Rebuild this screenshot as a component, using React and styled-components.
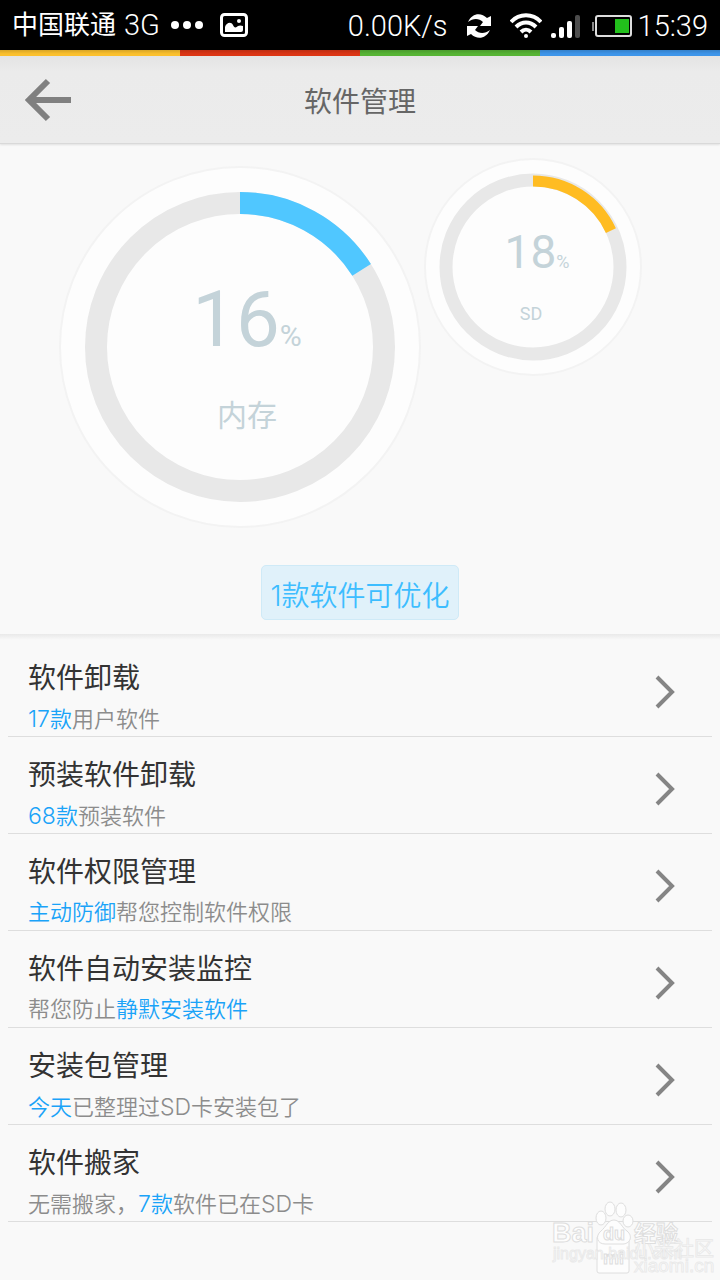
import React from "react";
import styled, { createGlobalStyle } from "styled-components";

const GlobalStyle = createGlobalStyle`
  * {
    box-sizing: border-box;
  }
  body {
    margin: 0;
    background: #f9f9f9;
    font-family: "Liberation Sans", "Noto Sans CJK SC", sans-serif;
  }
`;

const Page = styled.div`
  position: relative;
  width: 100%;
  min-height: 100vh;
  overflow: hidden;
`;

const StatusBar = styled.div`
  display: flex;
  align-items: center;
  justify-content: space-between;
  height: 50px;
  padding: 0 12px;
  background: #000;
  color: #fff;
  font-family: Roboto, "Noto Sans CJK SC", sans-serif;
  font-size: 26px;
  line-height: 48px;
`;

const StatusGroup = styled.div`
  display: flex;
  align-items: center;
  padding-top: ${(props) => props.$top || 0}px;
`;

const Carrier = styled.span`
  margin-right: 8px;
`;

const StatusText = styled.span`
  margin-left: ${(props) => props.$gap || 0}px;
  font-size: 29px;
  font-weight: 300;
`;

const StatusIcon = styled.svg`
  display: block;
  margin-left: ${(props) => props.$gap || 0}px;
`;

const Stripes = styled.div`
  display: grid;
  grid-template-columns: repeat(4, 1fr);
  height: 6px;
`;

const Stripe = styled.div`
  background: linear-gradient(rgba(0, 0, 0, 0.14), rgba(0, 0, 0, 0) 4px), ${(props) => props.$color};
`;

const Header = styled.header`
  display: grid;
  grid-template-columns: 96px 1fr 96px;
  align-items: center;
  height: 88px;
  background: linear-gradient(#e4e4e4, #ebebeb 16px, #ececec);
  border-bottom: 1px solid #d9d9d9;
  box-shadow: 0 1px 2px rgba(0, 0, 0, 0.1);
`;

const BackButton = styled.button`
  display: flex;
  align-items: center;
  height: 100%;
  padding: 0 0 0 24px;
  border: 0;
  background: none;
`;

const Title = styled.h1`
  margin: 0;
  padding-top: 6px;
  color: #666;
  font-size: 28px;
  font-weight: 400;
  line-height: 40px;
  text-align: center;
`;

const Summary = styled.section`
  height: 490px;
  display: flex;
  flex-direction: column;
  justify-content: space-between;
  align-items: center;
  padding: 14px 0;
`;

const Gauges = styled.div`
  display: flex;
  justify-content: center;
  align-items: flex-start;
  gap: 3px;
  width: 100%;
  padding-right: 19px;
`;

const GaugeBox = styled.div`
  display: grid;
  margin-top: ${(props) => props.$top}px;
`;

const Dial = styled.svg`
  grid-area: 1 / 1;
  display: block;
`;

const GaugeText = styled.div`
  grid-area: 1 / 1;
  display: flex;
  flex-direction: column;
  align-items: center;
  padding-top: ${(props) => (props.$large ? 108 : 66)}px;
  padding-left: ${(props) => (props.$large ? 14 : 8)}px;
  color: #c4d3d9;
  font-family: Roboto, "Noto Sans CJK SC", sans-serif;
`;

const Value = styled.div`
  font-size: ${(props) => (props.$large ? 78 : 46)}px;
  line-height: ${(props) => (props.$large ? 92 : 56)}px;
`;

const Percent = styled.span`
  font-size: ${(props) => (props.$large ? 30 : 18)}px;
`;

const GaugeLabel = styled.div`
  margin-top: 12px;
  padding-right: ${(props) => (props.$large ? 0 : 12)}px;
  font-size: ${(props) => (props.$large ? 30 : 18)}px;
  line-height: ${(props) => (props.$large ? 44 : 24)}px;
`;

const OptimizeButton = styled.button`
  height: 55px;
  padding: 6px 8px 0;
  border: 1px solid #cfeaf7;
  border-radius: 5px;
  background: #e0f1fa;
  color: #3dbdff;
  font-family: Inter, "Noto Sans CJK SC", sans-serif;
  font-size: 28px;
  font-weight: 350;
  line-height: 40px;
`;

const List = styled.ul`
  margin: 0;
  padding: 6px 8px 0;
  list-style: none;
  background: linear-gradient(#e9e9e9, #f9f9f9 6px);
`;

const Row = styled.li`
  border-bottom: 1px solid #dedede;
`;

const RowLink = styled.a`
  display: flex;
  align-items: center;
  justify-content: space-between;
  height: 96px;
  padding: 8px 36px 0 20px;
  color: inherit;
  text-decoration: none;
`;

const RowText = styled.div`
  padding-top: 8px;
`;

const RowTitle = styled.div`
  color: #333;
  font-size: 28px;
  line-height: 46px;
`;

const RowNote = styled.div`
  color: #8c8c8c;
  font-size: 22px;
  font-weight: 350;
  line-height: 34px;
`;

const Mark = styled.span`
  color: #1aa3f8;
`;

const Latin = styled.span`
  font-family: Inter, sans-serif;
  font-size: 23px;
  font-weight: 300;
`;

const Watermark = styled.svg`
  position: absolute;
  right: 0;
  bottom: 0;
  pointer-events: none;
`;

const stripes = ["#fbc02d", "#dc3514", "#56b434", "#3d95ea"];

const items = [
  { title: "软件卸载", note: <><Mark><Latin>17</Latin>款</Mark>用户软件</> },
  { title: "预装软件卸载", note: <><Mark><Latin>68</Latin>款</Mark>预装软件</> },
  { title: "软件权限管理", note: <><Mark>主动防御</Mark>帮您控制软件权限</> },
  { title: "软件自动安装监控", note: <>帮您防止<Mark>静默安装软件</Mark></> },
  { title: "安装包管理", note: <><Mark>今天</Mark>已整理过<Latin>SD</Latin>卡安装包了</> },
  { title: "软件搬家", note: <>无需搬家，<Mark><Latin>7</Latin>款</Mark>软件已在<Latin>SD</Latin>卡</> },
];

function Gauge({ size, ring, ringWidth, arc, arcWidth, percent, color, label, large, top }) {
  const c = size / 2;
  const length = 2 * Math.PI * arc;
  return (
    <GaugeBox $top={top}>
      <Dial width={size} height={size}>
        <circle cx={c} cy={c} r={c - 1} fill="#fdfdfd" stroke="#f3f3f3" strokeWidth="2" />
        <circle cx={c} cy={c} r={ring} fill="none" stroke="#e8e8e8" strokeWidth={ringWidth} />
        <circle
          cx={c}
          cy={c}
          r={arc}
          fill="none"
          stroke={color}
          strokeWidth={arcWidth}
          strokeDasharray={`${(length * percent) / 100} ${length}`}
          transform={`rotate(-90 ${c} ${c})`}
        />
      </Dial>
      <GaugeText $large={large}>
        <Value $large={large}>
          {percent}
          <Percent $large={large}>%</Percent>
        </Value>
        <GaugeLabel $large={large}>{label}</GaugeLabel>
      </GaugeText>
    </GaugeBox>
  );
}

function PhoneStatus() {
  return (
    <StatusBar>
      <StatusGroup>
        <Carrier>中国联通</Carrier>
        <StatusText>3G</StatusText>
        <StatusIcon $gap={11} width="32" height="8" fill="#fff">
          <circle cx="4" cy="4" r="4" />
          <circle cx="16" cy="4" r="4" />
          <circle cx="28" cy="4" r="4" />
        </StatusIcon>
        <StatusIcon $gap={17} width="28" height="24" fill="none">
          <rect x="1.5" y="1.5" width="25" height="21" rx="3" stroke="#fff" strokeWidth="3" />
          <path d="M5 19V14C6 10 11 8 13 12C14 15 16 15 18 13Q20 12 23 13V17Q23 19 21 19Z" fill="#fff" />
          <circle cx="19" cy="8" r="2" fill="#fff" />
        </StatusIcon>
      </StatusGroup>
      <StatusGroup $top={2}>
        <StatusText>0.00K/s</StatusText>
        <StatusIcon $gap={18} width="26" height="24" fill="#fff">
          <path d="M2 8C6 -1 15 -2 21 4L25 2V12H14L17 8C13 4 7 4 2 8Z" />
          <path d="M2 8C6 -1 15 -2 21 4L25 2V12H14L17 8C13 4 7 4 2 8Z" transform="rotate(180 13 12)" />
        </StatusIcon>
        <StatusIcon $gap={18} width="32" height="26" fill="none" stroke="#fff" strokeWidth="4">
          <path d="M1 9C9 0 23 0 31 9M6 14C12 8 20 8 26 14M11 19C14 16 18 16 21 19" />
          <circle cx="16" cy="23" r="2" fill="#fff" stroke="none" />
        </StatusIcon>
        <StatusIcon $gap={9} width="30" height="24" fill="#fff">
          <rect x="0" y="19" width="5" height="5" rx="2" />
          <rect x="8" y="13" width="5" height="11" rx="2" />
          <rect x="16" y="7" width="5" height="17" rx="2" />
          <rect x="24" y="1" width="5" height="23" rx="2" fill="#4d4d4d" />
        </StatusIcon>
        <StatusIcon $gap={11} width="41" height="22" fill="none">
          <rect x="0" y="7" width="2" height="9" fill="#888" />
          <rect x="4" y="1" width="35" height="20" rx="2" stroke="#ddd" strokeWidth="2" />
          <rect x="23" y="4" width="14" height="14" fill="#22c01c" />
        </StatusIcon>
        <StatusText $gap={5}>15:39</StatusText>
      </StatusGroup>
    </StatusBar>
  );
}

export default function App() {
  return (
    <Page>
      <GlobalStyle />
      <PhoneStatus />
      <Stripes>
        {stripes.map((color) => (
          <Stripe key={color} $color={color} />
        ))}
      </Stripes>
      <Header>
        <BackButton aria-label="返回">
          <svg width="48" height="44" fill="none" stroke="#808080" strokeWidth="6">
            <path d="M24 3L5 22L24 41M5 22H47" />
          </svg>
        </BackButton>
        <Title>软件管理</Title>
      </Header>
      <Summary>
        <Gauges>
          <Gauge large top={8} size={362} ring={144} ringWidth={22} arc={144} arcWidth={22} percent={16} color="#50c7ff" label="内存" />
          <Gauge top={0} size={218} ring={87} ringWidth={13} arc={86} arcWidth={11} percent={18} color="#ffbc22" label="SD" />
        </Gauges>
        <OptimizeButton>1款软件可优化</OptimizeButton>
      </Summary>
      <List>
        {items.map((item) => (
          <Row key={item.title}>
            <RowLink href="#">
              <RowText>
                <RowTitle>{item.title}</RowTitle>
                <RowNote>{item.note}</RowNote>
              </RowText>
              <svg width="22" height="34" fill="none" stroke="#858585" strokeWidth="4">
                <path d="M3 2L18 17L3 32" />
              </svg>
            </RowLink>
          </Row>
        ))}
      </List>
      <Watermark width="172" height="82" fill="#fdfdfd" stroke="#dedede" strokeWidth="1" fontFamily='"Liberation Sans", "Noto Sans CJK SC", sans-serif'>
        <rect x="49" y="38" width="32" height="37" rx="2" />
        <text x="55" y="66" fontSize="18" fontWeight="700">mi</text>
        <ellipse cx="53" cy="20" rx="5" ry="7" />
        <ellipse cx="62" cy="11" rx="5" ry="7" />
        <ellipse cx="73" cy="12" rx="5" ry="7" />
        <ellipse cx="80" cy="23" rx="5" ry="6" />
        <path d="M66 22c6 0 8 8 13 11 7 6 2 13-4 13H57c-8 0-10-8-4-13 5-4 7-11 13-11z" />
        <text x="4" y="44" fontSize="27" fontWeight="700">Bai</text>
        <text x="55" y="42" fontSize="18" fontWeight="700">du</text>
        <text x="86" y="43" fontSize="22" fontWeight="700">经验</text>
        <g strokeOpacity="0.6">
          <text x="5" y="61" fontSize="16">jingyan.baidu.com</text>
          <text x="86" y="58" fontSize="20">小米社区</text>
          <text x="86" y="74" fontSize="19">xiaomi.cn</text>
        </g>
      </Watermark>
    </Page>
  );
}
